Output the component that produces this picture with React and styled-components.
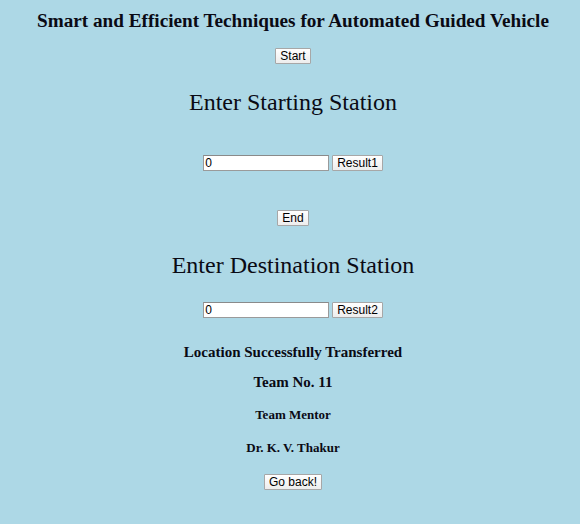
import React from "react";
import styled, { createGlobalStyle } from "styled-components";

const Global = createGlobalStyle`
  html, body {
    margin: 0;
    padding: 0;
    background: #add8e6;
    min-height: 100%;
  }
  body {
    font-family: "Liberation Serif", "Times New Roman", serif;
    color: #0a0a14;
  }
`;

const Page = styled.main`
  display: flex;
  flex-direction: column;
  align-items: center;
  min-height: 524px;
  box-sizing: border-box;
  padding: 9px 0 0 6px;
`;

const Title = styled.h1`
  margin: 0;
  font-size: 19.2px;
  line-height: 24px;
  font-weight: bold;
  text-align: center;
  white-space: nowrap;
`;

const Heading = styled.h2`
  margin: ${(p) => p.$top}px 0 0;
  font-size: 24px;
  line-height: 28px;
  font-weight: normal;
  text-align: center;
`;

const Note = styled.p`
  margin: ${(p) => p.$top}px 0 0;
  font-size: ${(p) => p.$size}px;
  line-height: ${(p) => p.$line}px;
  font-weight: bold;
  text-align: center;
`;

const Button = styled.button`
  margin-top: ${(p) => p.$top || 0}px;
  height: 16px;
  box-sizing: border-box;
  padding: 0 4px;
  font-family: "Liberation Sans", Arial, sans-serif;
  font-size: 12px;
  line-height: 14px;
  color: #000;
  background: linear-gradient(#ffffff, #ededed);
  border: 1px solid #a7a7a7;
  border-radius: 1px;
  cursor: pointer;
`;

const Row = styled.div`
  margin-top: ${(p) => p.$top}px;
  display: flex;
  align-items: center;
  gap: 3px;
  height: 16px;
`;

const Field = styled.input`
  width: 126px;
  height: 16px;
  box-sizing: border-box;
  padding: 0 1px;
  font-family: "Liberation Sans", Arial, sans-serif;
  font-size: 12px;
  color: #000;
  background: #fff;
  border: 1px solid #9a9a9a;
  border-top-color: #8a8a8a;
  outline: none;
`;

export default function App() {
  return (
    <>
      <Global />
      <Page>
        <Title>Smart and Efficient Techniques for Automated Guided Vehicle</Title>
        <Button $top={15}>Start</Button>
        <Heading $top={24}>Enter Starting Station</Heading>
        <Row $top={39}>
          <Field defaultValue="0" />
          <Button>Result1</Button>
        </Row>
        <Button $top={39}>End</Button>
        <Heading $top={25}>Enter Destination Station</Heading>
        <Row $top={23}>
          <Field defaultValue="0" />
          <Button>Result2</Button>
        </Row>
        <Note $top={24} $size={15} $line={20}>Location Successfully Transferred</Note>
        <Note $top={9} $size={15} $line={22}>Team No. 11</Note>
        <Note $top={13} $size={13} $line={18}>Team Mentor</Note>
        <Note $top={15} $size={13} $line={18}>Dr. K. V. Thakur</Note>
        <Button $top={17}>Go back!</Button>
      </Page>
    </>
  );
}
